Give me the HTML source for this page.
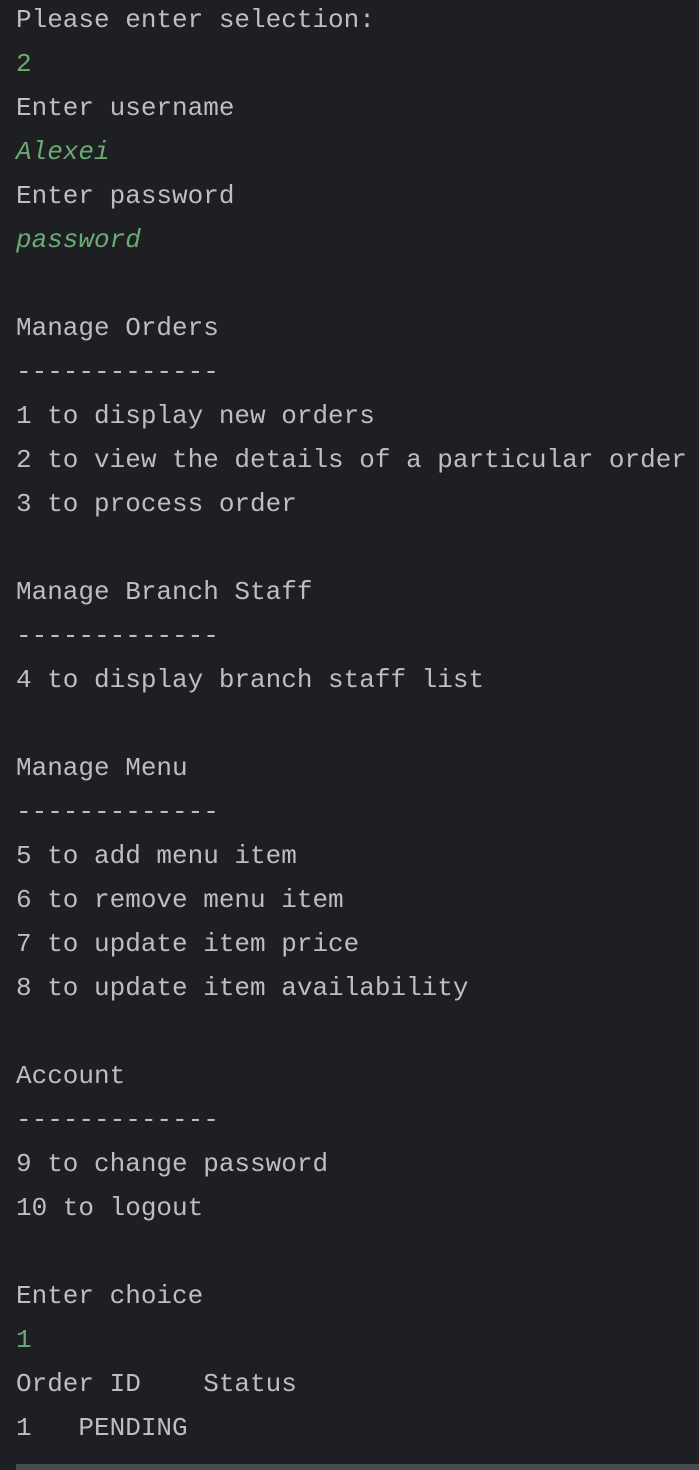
<!DOCTYPE html><html><head><style>
html,body{margin:0;background:#1e1f22;width:699px;height:1470px;overflow:hidden}
pre{margin:0;position:absolute;left:16px;top:-2px;font-family:"Liberation Mono",monospace;font-size:26px;line-height:44px;color:#bcbec4;white-space:pre}
.g{color:#6aab73}.i{font-style:italic}
.sb{position:absolute;left:16px;top:1464px;width:683px;height:6px;background:#4a4b4e}
</style></head><body><pre>Please enter selection:
<span class="g">2</span>
Enter username
<span class="g i">Alexei</span>
Enter password
<span class="g i">password</span>

Manage Orders
-------------
1 to display new orders
2 to view the details of a particular order
3 to process order

Manage Branch Staff
-------------
4 to display branch staff list

Manage Menu
-------------
5 to add menu item
6 to remove menu item
7 to update item price
8 to update item availability

Account
-------------
9 to change password
10 to logout

Enter choice
<span class="g">1</span>
Order ID    Status
1   PENDING</pre><div class="sb"></div></body></html>
